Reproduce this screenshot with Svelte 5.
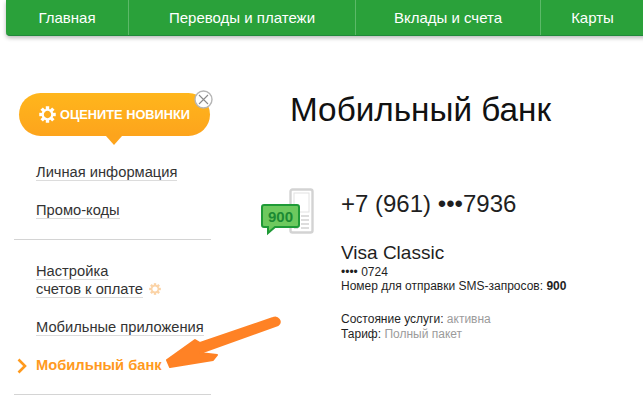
<script>
    const tabs = [
        { label: 'Главная', width: 123 },
        { label: 'Переводы и платежи', width: 227 },
        { label: 'Вклады и счета', width: 185 },
        { label: 'Карты', width: 104 }
    ];
</script>

{#snippet sun(size, fill)}
    <svg class="sun" width={size} height={size} viewBox="0 0 20 20">
        <circle cx="10" cy="10" r="5.6" fill="none" stroke={fill} stroke-width="2.6" />
        {#each [0, 45, 90, 135, 180, 225, 270, 315] as a}
            <rect x="8" y="0.3" width="4" height="3.6" fill={fill} transform="rotate({a} 10 10)" />
        {/each}
    </svg>
{/snippet}

<div class="page">
    <nav class="nav">
        {#each tabs as tab}
            <a class="tab" style="width: {tab.width}px">{tab.label}</a>
        {/each}
    </nav>

    <div class="columns">
        <aside class="side">
            <div class="promo">
                {@render sun(17, '#fff')}
                <span>ОЦЕНИТЕ НОВИНКИ</span>
                <span class="close">
                    <svg width="19" height="19" viewBox="0 0 19 19">
                        <circle cx="9.5" cy="9.5" r="8.5" fill="#fff" stroke="#b5b5b5" stroke-width="1.4" />
                        <path d="M5 5l9 9M14 5l-9 9" stroke="#8a8a8a" stroke-width="1.1" fill="none" />
                    </svg>
                </span>
            </div>

            <ul class="menu first">
                <li><a>Личная информация</a></li>
                <li><a>Промо-коды</a></li>
            </ul>
            <ul class="menu second">
                <li class="two">
                    <a>Настройка</a><br />
                    <a>счетов к оплате</a>
                    {@render sun(12, '#fbd3a6')}
                </li>
                <li><a>Мобильные приложения</a></li>
                <li class="current">
                    <svg class="chevron" width="10" height="16" viewBox="0 0 10 16">
                        <path d="M1.5 1.5L8 8l-6.500 6.500" fill="none" stroke="#ff9a1e" stroke-width="2.600" />
                    </svg>
                    Мобильный банк
                </li>
            </ul>
        </aside>

        <main class="content">
            <h1>Мобильный банк</h1>
            <section class="service">
                <svg class="phone-icon" width="56" height="48" viewBox="0 0 56 48">
                    <rect x="29.500" y="1.500" width="22" height="43" rx="2" fill="#fff" stroke="#d3d3d3" stroke-width="2.400" />
                    <rect x="33" y="5" width="15" height="19" fill="none" stroke="#e2e2e2" stroke-width="1" />
                    <path d="M33 28h4M40 28h8M33 32h4M40 32h8M33 36h4M40 36h8M33 40h4M40 40h8" stroke="#dddddd" stroke-width="2" />
                    <path d="M3 17h33a2 2 0 0 1 2 2v18a2 2 0 0 1-2 2H14l-7 6v-6H3a2 2 0 0 1-2-2V19a2 2 0 0 1 2-2z" fill="#6dc95e" stroke="#1f9a37" stroke-width="2" />
                    <text x="19.500" y="34" text-anchor="middle" class="sms">900</text>
                </svg>
                <div class="details">
                    <div class="phone">+7 (961) •••7936</div>
                    <div class="card">Visa Classic</div>
                    <div class="small">•••• 0724</div>
                    <div class="small">Номер для отправки SMS-запросов: <b>900</b></div>
                    <div class="status">
                        <div class="small">Состояние услуги: <span class="muted">активна</span></div>
                        <div class="small">Тариф: <span class="muted">Полный пакет</span></div>
                    </div>
                </div>
            </section>
        </main>
    </div>

    <svg class="arrow" width="126" height="66" viewBox="0 0 126 66">
        <path d="M113 8L40 33L35 30L7 50L10 57L53 50L57 45L40 43L118 15C122 12 118 6 113 8Z" fill="#ff8225" stroke="#ff8225" stroke-width="2" stroke-linejoin="round" />
    </svg>
</div>

<style>
    :global(body) {
        background: #fff;
        font-family: 'Liberation Sans', Arial, sans-serif;
        color: #1f1f1f;
    }

    .page {
        position: relative;
        width: 643px;
        height: 403px;
        overflow: hidden;
    }

    .nav {
        display: flex;
        height: 35px;
        margin-left: 6px;
        background: #2aa13a;
        border-bottom: 1px solid #20893a;
        border-bottom-left-radius: 4px;
        box-shadow: 0 2px 4px rgba(0, 0, 0, 0.28);
        box-sizing: content-box;
        width: 760px;
    }

    .tab {
        display: flex;
        flex: none;
        align-items: center;
        justify-content: center;
        height: 35px;
        color: #fff;
        font-size: 15px;
        border-right: 1px solid #5cb968;
        box-sizing: border-box;
    }

    .columns {
        display: flex;
        margin-top: 56px;
    }

    .side {
        flex: none;
        width: 197px;
        margin-left: 14px;
    }

    .promo {
        position: relative;
        display: flex;
        align-items: center;
        justify-content: center;
        gap: 4px;
        width: 191px;
        height: 43px;
        margin-top: 1px;
        margin-left: 5px;
        background: linear-gradient(#ffb61c, #fda41c);
        border-radius: 22px;
        color: #fff;
        font-size: 12.8px;
        font-weight: bold;
    }

    .promo::after {
        content: '';
        position: absolute;
        left: 87px;
        bottom: -9px;
        border: 8px solid transparent;
        border-bottom: 0;
        border-top: 9px solid #fda41c;
    }

    .close {
        position: absolute;
        top: -3px;
        right: -3px;
        line-height: 0;
    }

    .sun {
        flex: none;
    }

    .menu {
        list-style: none;
        margin: 0;
        padding: 0 0 0 22px;
        font-size: 14.7px;
        line-height: 19px;
    }

    .menu a {
        color: #333;
        border-bottom: 1px solid #dcdcdc;
    }

    .menu li {
        position: relative;
        margin-bottom: 19px;
    }

    .first {
        padding-top: 27px;
        padding-bottom: 0;
        border-bottom: 1px solid #d4d4d4;
    }

    .second {
        padding-top: 22px;
        padding-bottom: 0;
        border-bottom: 1px solid #d4d4d4;
    }

    .two {
        line-height: 18px;
    }

    .menu .two {
        margin-bottom: 20px;
    }

    .two .sun {
        vertical-align: -1px;
        margin-left: 2px;
    }

    .current {
        color: #ff9a1e;
        font-weight: bold;
    }

    .chevron {
        position: absolute;
        left: -19px;
        top: 2px;
    }

    .content {
        flex: 1;
        margin-left: 79px;
    }

    h1 {
        margin: 0;
        font-size: 33.3px;
        font-weight: normal;
        line-height: 36px;
        color: #111;
    }

    .service {
        display: flex;
        margin-top: 62px;
        margin-left: -29px;
    }

    .phone-icon {
        flex: none;
        margin-top: -2px;
    }

    .sms {
        font-family: 'Liberation Sans', Arial, sans-serif;
        font-size: 15px;
        font-weight: bold;
        fill: #1b8a33;
    }

    .details {
        margin-left: 24px;
    }

    .phone {
        font-size: 24px;
        line-height: 28px;
    }

    .card {
        margin-top: 22px;
        font-size: 19px;
        line-height: 25px;
    }

    .small {
        font-size: 12px;
        line-height: 14px;
    }

    .status {
        margin-top: 19px;
    }

    .status .small {
        line-height: 15px;
    }

    .muted {
        color: #9b9b9b;
    }

    .arrow {
        position: absolute;
        left: 160px;
        top: 310px;
    }
</style>
